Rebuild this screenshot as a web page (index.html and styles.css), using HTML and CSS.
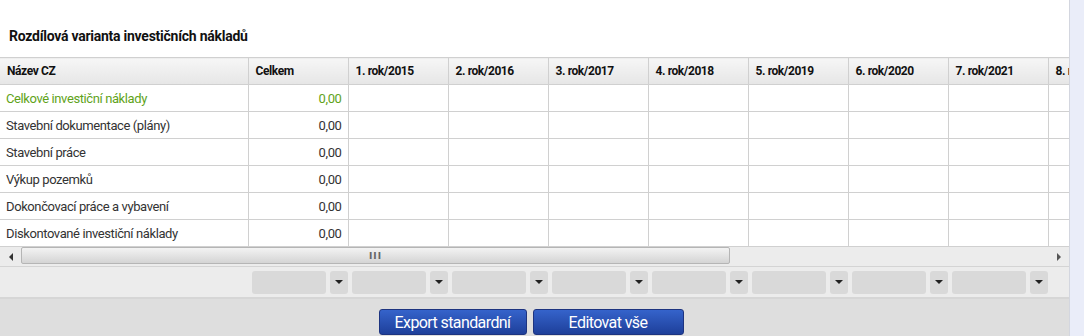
FILE: index.html
```html
<!DOCTYPE html>
<html lang="cs">

<head>
    <meta charset="UTF-8">
    <title>Rozdílová varianta investičních nákladů</title>
    <link rel="stylesheet" href="styles.css">
</head>

<body>

    <div class="page">
        <div class="main">
            <h3 class="title">Rozdílová varianta investičních nákladů</h3>

            <div class="grid-wrap">
                <table class="grid">
                    <colgroup>
                        <col class="c-name">
                        <col class="c-num">
                        <col class="c-num"><col class="c-num"><col class="c-num"><col class="c-num">
                        <col class="c-num"><col class="c-num"><col class="c-num"><col class="c-num">
                    </colgroup>
                    <thead>
                        <tr>
                            <th>Název CZ</th>
                            <th>Celkem</th>
                            <th>1. rok/2015</th>
                            <th>2. rok/2016</th>
                            <th>3. rok/2017</th>
                            <th>4. rok/2018</th>
                            <th>5. rok/2019</th>
                            <th>6. rok/2020</th>
                            <th>7. rok/2021</th>
                            <th>8. rok/2022</th>
                        </tr>
                    </thead>
                    <tbody id="rows">
                    </tbody>
                </table>
            </div>

            <div class="hscroll">
                <span class="arrow left"></span>
                <div class="track">
                    <div class="thumb"><span class="grip">III</span></div>
                </div>
                <span class="arrow right"></span>
            </div>

            <div class="filters">
                <div class="f-spacer"></div>
                <div class="f-cell"><span class="f-box"></span><span class="f-btn"></span></div>
                <div class="f-cell"><span class="f-box"></span><span class="f-btn"></span></div>
                <div class="f-cell"><span class="f-box"></span><span class="f-btn"></span></div>
                <div class="f-cell"><span class="f-box"></span><span class="f-btn"></span></div>
                <div class="f-cell"><span class="f-box"></span><span class="f-btn"></span></div>
                <div class="f-cell"><span class="f-box"></span><span class="f-btn"></span></div>
                <div class="f-cell"><span class="f-box"></span><span class="f-btn"></span></div>
                <div class="f-cell"><span class="f-box"></span><span class="f-btn"></span></div>
            </div>

            <div class="footer">
                <button class="btn btn-export">Export standardní</button>
                <button class="btn btn-edit">Editovat vše</button>
            </div>
        </div>
        <div class="side"></div>
    </div>

    <script>
        const rows = [
            { name: "Celkové investiční náklady", total: "0,00", sum: true },
            { name: "Stavební dokumentace (plány)", total: "0,00" },
            { name: "Stavební práce", total: "0,00" },
            { name: "Výkup pozemků", total: "0,00" },
            { name: "Dokončovací práce a vybavení", total: "0,00" },
            { name: "Diskontované investiční náklady", total: "0,00" }
        ];

        const tbody = document.querySelector('#rows');

        for (let i = 0; i < rows.length; i++) {
            let cells = '';
            for (let y = 0; y < 8; y++) {
                cells += '<td></td>';
            }
            tbody.innerHTML += `
                <tr class="${rows[i].sum ? 'sum' : ''}">
                    <td>${rows[i].name}</td>
                    <td class="num">${rows[i].total}</td>
                    ${cells}
                </tr>
            `;
        }
    </script>

</body>

</html>
```

FILE: styles.css
```css
body {
    margin: 0;
    font-family: "Roboto", sans-serif;
    font-size: 13px;
    letter-spacing: -0.4px;
    color: #333;
    background: #eaedf9;
}

.page {
    display: flex;
    height: 336px;
    overflow: hidden;
}

.main {
    width: 1069px;
    flex: none;
    background: #fff;
    border-right: 1px solid #d3d6df;
}

.side {
    flex: 1;
    background: #eaedf9;
}

.title {
    margin: 0;
    padding: 28px 0 0 9px;
    height: 29px;
    font-size: 14px;
    font-weight: bold;
    letter-spacing: -0.25px;
    color: #111;
}

.grid-wrap {
    width: 1069px;
    overflow: hidden;
}

.grid {
    table-layout: fixed;
    border-collapse: collapse;
    width: 1148px;
}

.c-name {
    width: 248px;
}

.c-num {
    width: 100px;
}

.grid th,
.grid td {
    height: 26px;
    padding: 0 6px;
    border: 1px solid #d0d0d0;
    white-space: nowrap;
    overflow: hidden;
}

.grid th:first-child,
.grid td:first-child {
    border-left: none;
}

.grid th {
    text-align: left;
    font-weight: bold;
    font-size: 12px;
    color: #111;
    padding-left: 7px;
    background: linear-gradient(#f6f6f6, #e6e6e6);
}

.grid td {
    background: #fff;
}

.grid td.num {
    text-align: right;
}

.grid tr.sum td {
    color: #5fa31a;
}

.hscroll {
    display: flex;
    align-items: center;
    height: 19px;
    background: #ececec;
    border-bottom: 1px solid #d4d4d4;
}

.arrow {
    width: 21px;
    height: 19px;
    display: flex;
    justify-content: center;
    align-items: center;
}

.arrow.left::before {
    content: "";
    border-top: 4px solid transparent;
    border-bottom: 4px solid transparent;
    border-right: 4px solid #333;
}

.arrow.right::before {
    content: "";
    border-top: 4px solid transparent;
    border-bottom: 4px solid transparent;
    border-left: 4px solid #555;
}

.track {
    flex: 1;
    height: 19px;
}

.thumb {
    width: 709px;
    height: 17px;
    box-sizing: border-box;
    border: 1px solid #b5b5b5;
    border-radius: 2px;
    background: linear-gradient(#f3f3f3, #d4d4d4);
    display: flex;
    justify-content: center;
    align-items: center;
}

.grip {
    font-size: 9px;
    font-weight: bold;
    color: #666;
    letter-spacing: 1px;
    font-family: "DejaVu Sans", sans-serif;
}

.filters {
    display: flex;
    height: 30px;
    align-items: center;
    background: #ececec;
    border-bottom: 2px solid #d6d6d6;
    overflow: hidden;
}

.f-spacer {
    width: 252px;
    flex: none;
}

.f-cell {
    width: 100px;
    flex: none;
    display: flex;
    gap: 4px;
}

.f-box {
    width: 74px;
    height: 23px;
    border-radius: 3px;
    background: #d9d9d9;
}

.f-btn {
    width: 18px;
    height: 23px;
    border-radius: 3px;
    background: #d9d9d9;
    display: flex;
    justify-content: center;
    align-items: center;
}

.f-btn::before {
    content: "";
    border-left: 4px solid transparent;
    border-right: 4px solid transparent;
    border-top: 4px solid #222;
}

.footer {
    height: 40px;
    background: #dedede;
    display: flex;
    justify-content: center;
    align-items: flex-start;
    gap: 6px;
    padding: 10px 7px 0 0;
    box-sizing: border-box;
}

.btn {
    height: 26px;
    padding: 0;
    border: 1px solid #1d3480;
    border-radius: 3px;
    background: linear-gradient(#3563cb, #1e3f9a);
    color: #fff;
    font-family: "Roboto", sans-serif;
    font-size: 16px;
    letter-spacing: -0.6px;
}

.btn-export {
    width: 148px;
}

.btn-edit {
    width: 151px;
}
```
